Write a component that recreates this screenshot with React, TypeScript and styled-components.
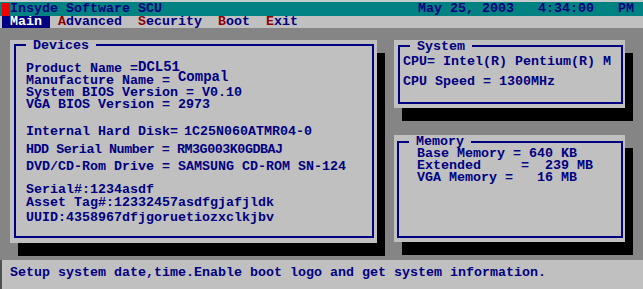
import React from 'react';
import styled, { createGlobalStyle } from 'styled-components';

const NAVY = '#000080';
const LIGHT = '#c0c0c0';
const BODY_GRAY = '#858585';
const TEAL = '#008282';
const HOT_RED = '#900000';

const GlobalStyle = createGlobalStyle`
	html, body {
		margin: 0;
		padding: 0;
		background: ${BODY_GRAY};
	}
`;

const MENU = [
	{ id: 'main', label: 'Main' },
	{ id: 'advanced', label: 'Advanced' },
	{ id: 'security', label: 'Security' },
	{ id: 'boot', label: 'Boot' },
	{ id: 'exit', label: 'Exit' },
];

const App = () => {
	return (
		<>
			<GlobalStyle />
			<Screen>
				<TitleBar>
					<RedCell />
					<AppName>Insyde Software SCU</AppName>
					<Clock>May 25, 2003   4:34:00   PM</Clock>
				</TitleBar>
				<MenuBar>
					{MENU.map(({ id, label }, i) => (
						<MenuItem key={id} $active={i === 0}>
							{i === 0 ? (
								label
							) : (
								<>
									<Hot>{label[0]}</Hot>
									{label.slice(1)}
								</>
							)}
						</MenuItem>
					))}
				</MenuBar>

				<Body>
					<Panel $w={367} $h={203} $pad="4px 3px 5px 4px">
						<Frame>
							<Legend $top={-6}>Devices</Legend>
							<Content $indent={10}>
								<Line $gap={11}>
									Product Name =<Patch $lift={1}>DCL51</Patch>
								</Line>
								<Line>
									Manufacture Name = <Patch $lift={3}>Compal</Patch>
								</Line>
								<Line>System BIOS Version = V0.10</Line>
								<Line>VGA BIOS Version = 2973</Line>

								<Line $gap={15}>
									Internal Hard Disk=<Value>1C25N060ATMR04-0</Value>
								</Line>
								<Line $gap={6} $tight={-0.45}>
									HDD Serial Number = RM3G003K0GDBAJ
								</Line>
								<Line $gap={5}>DVD/CD-Rom Drive = SAMSUNG CD-ROM SN-124</Line>

								<Line $gap={11}>Serial#:1234asdf</Line>
								<Line $gap={1}>Asset Tag#:12332457asdfgjafjldk</Line>
								<Line $gap={3}>UUID:4358967dfjgoruetiozxclkjbv</Line>
							</Content>
						</Frame>
					</Panel>

					<RightColumn>
						<Panel $w={231} $h={68} $pad="5px 2px 4px 4px">
							<Frame>
								<Legend $top={-6}>System</Legend>
								<Content $indent={3}>
									<Line $gap={3}>CPU= Intel(R) Pentium(R) M</Line>
									<Line $gap={8}>CPU Speed = 1300MHz</Line>
								</Content>
							</Frame>
						</Panel>

						<Panel $w={231} $h={107} $pad="6px 2px 4px 3px">
							<Frame>
								<Legend $top={-7}>Memory</Legend>
								<Content $indent={18}>
									<Line>Base Memory = 640 KB</Line>
									<Line>Extended     =  239 MB</Line>
									<Line>VGA Memory =   16 MB</Line>
								</Content>
							</Frame>
						</Panel>
					</RightColumn>
				</Body>

				<StatusBar>Setup system date,time.Enable boot logo and get system information.</StatusBar>
			</Screen>
		</>
	);
};

const Screen = styled.div`
	width: 643px;
	height: 289px;
	display: flex;
	flex-direction: column;
	overflow: hidden;
	font-family: 'Liberation Mono', 'DejaVu Sans Mono', monospace;
	font-size: 13.333px;
	font-weight: bold;
	color: ${NAVY};
	white-space: pre;
`;

const TitleBar = styled.div`
	height: 14px;
	border-top: 2px solid #c4cccc;
	background: ${TEAL};
	display: flex;
	align-items: flex-end;
	line-height: 14px;
`;

const RedCell = styled.span`
	width: 8px;
	height: 13px;
	margin-left: 2px;
	background: #f00000;
`;

const AppName = styled.span`
	color: ${NAVY};
`;

const Clock = styled.span`
	margin-left: auto;
	padding-right: 9px;
`;

const MenuBar = styled.div`
	height: 12px;
	line-height: 12px;
	background: ${LIGHT};
	padding-left: 2px;
	display: flex;
`;

const MenuItem = styled.span<{ $active?: boolean }>`
	padding: 0 8px;
	background: ${(p) => (p.$active ? NAVY : 'transparent')};
	color: ${(p) => (p.$active ? '#ffffff' : NAVY)};
`;

const Hot = styled.span`
	color: ${HOT_RED};
`;

const Body = styled.div`
	flex: 1;
	background: ${BODY_GRAY};
	display: flex;
	gap: 17px;
	padding: 12px 0 0 10px;
`;

const RightColumn = styled.div`
	display: flex;
	flex-direction: column;
	gap: 27px;
`;

const Panel = styled.div<{ $w: number; $h: number; $pad: string }>`
	box-sizing: border-box;
	width: ${(p) => p.$w}px;
	height: ${(p) => p.$h}px;
	padding: ${(p) => p.$pad};
	background: ${LIGHT};
	box-shadow: 8px 13px 0 0 #000;
`;

const Frame = styled.div`
	box-sizing: border-box;
	height: 100%;
	border: 2px solid ${NAVY};
`;

const Legend = styled.div<{ $top: number }>`
	display: table;
	height: 12px;
	line-height: 12px;
	margin: ${(p) => p.$top}px 0 0 10px;
	padding: 0 7px;
	background: ${LIGHT};
`;

const Content = styled.div<{ $indent: number }>`
	padding-left: ${(p) => p.$indent}px;
`;

const Line = styled.div<{ $gap?: number; $tight?: number }>`
	height: 12px;
	line-height: 12px;
	margin-top: ${(p) => p.$gap ?? 0}px;
	letter-spacing: ${(p) => p.$tight ?? 0}px;
`;

const Patch = styled.span<{ $lift: number }>`
	font-size: 14px;
	line-height: 0;
	vertical-align: ${(p) => p.$lift}px;
`;

const Value = styled.span`
	margin-left: 6px;
`;

const StatusBar = styled.div`
	box-sizing: border-box;
	height: 29px;
	background: ${LIGHT};
	border-left: 2px solid #505050;
	padding: 7px 0 0 8px;
	line-height: 12px;
`;

export default App;
